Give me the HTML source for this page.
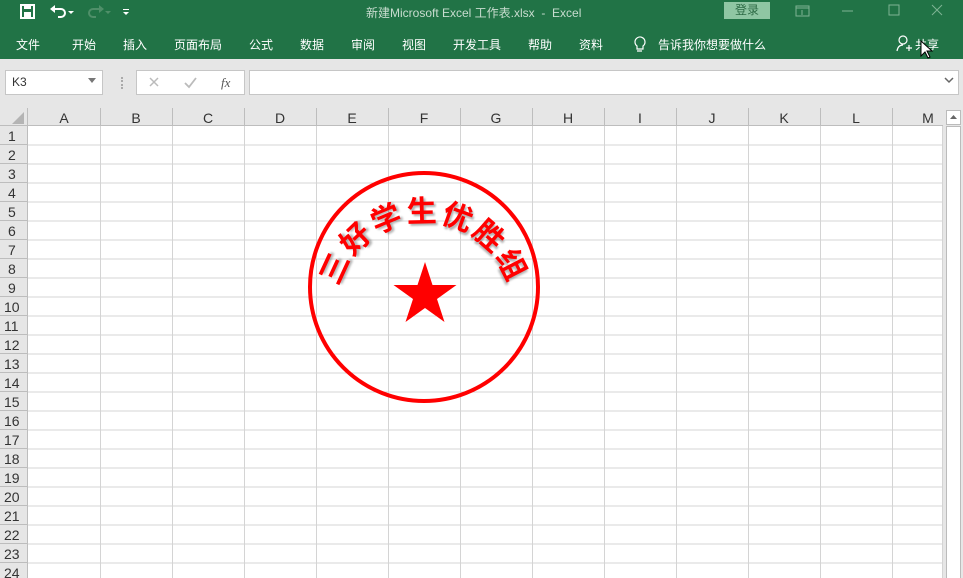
<!DOCTYPE html>
<html><head><meta charset="utf-8"><style>
body{margin:0;width:963px;height:578px;overflow:hidden;background:#fff;font-family:"Liberation Sans","Noto Sans CJK SC",sans-serif;position:relative}
.a{position:absolute}
.tab{position:absolute;top:36px;color:#fff;font-size:12px}
</style></head><body>
<div class="a" style="left:0;top:0;width:963px;height:59px;background:#217346"></div>
<svg class="a" style="left:0;top:0" width="140" height="24">
<rect x="21" y="5" width="13" height="13" fill="none" stroke="#fff" stroke-width="2"/><rect x="24" y="5" width="7" height="4" fill="#fff"/><rect x="24" y="12" width="7" height="6" fill="#fff"/>
<path d="M53 9 h8 a4 4 0 0 1 0 8 h-3" fill="none" stroke="#fff" stroke-width="2"/><path d="M50 9 l5 -4 v8z" fill="#fff"/><path d="M68 11 l3 3 l3 -3z" fill="#fff"/>
<path d="M101 9 h-8 a4 4 0 0 0 0 8 h3" fill="none" stroke="#4f8f69" stroke-width="2"/><path d="M104 9 l-5 -4 v8z" fill="#4f8f69"/><path d="M105 11 l3 3 l3 -3z" fill="#4f8f69"/>
<rect x="123" y="9" width="6" height="1" fill="#fff"/><path d="M123 12 l3 3 l3 -3z" fill="#fff"/>
</svg>
<div class="a" style="left:366px;top:4px;color:#c8dccf;font-size:12px">新建Microsoft Excel 工作表.xlsx&nbsp; - &nbsp;Excel</div>
<div class="a" style="left:724px;top:2px;width:46px;height:17px;background:#8fc6a3;color:#2c6a44;font-size:12px;text-align:center;line-height:17px">登录</div>
<svg class="a" style="left:790px;top:0" width="173" height="24">
<rect x="6" y="6" width="13" height="10" fill="none" stroke="#7fb394"/><path d="M6 8 h13 M12 10 v5" stroke="#7fb394" fill="none"/>
<path d="M52 11 h11" stroke="#7fb394"/>
<rect x="99" y="5" width="10" height="10" fill="none" stroke="#7fb394"/>
<path d="M142 5 l10 10 M152 5 l-10 10" stroke="#7fb394"/>
</svg>
<div class="tab" style="left:16px">文件</div><div class="tab" style="left:72px">开始</div><div class="tab" style="left:123px">插入</div><div class="tab" style="left:174px">页面布局</div><div class="tab" style="left:249px">公式</div><div class="tab" style="left:300px">数据</div><div class="tab" style="left:351px">审阅</div><div class="tab" style="left:402px">视图</div><div class="tab" style="left:453px">开发工具</div><div class="tab" style="left:528px">帮助</div><div class="tab" style="left:579px">资料</div>
<svg class="a" style="left:630px;top:34px" width="20" height="20"><path d="M5 8 a5 5 0 1 1 8 4 v3 h-6 v-3 a5 5 0 0 1 -2 -4z M7 17 h5" fill="none" stroke="#fff" stroke-width="1.2"/></svg>
<div class="tab" style="left:658px">告诉我你想要做什么</div>
<svg class="a" style="left:895px;top:34px" width="20" height="20"><circle cx="8" cy="6" r="4" fill="none" stroke="#fff" stroke-width="1.2"/><path d="M2 17 q1 -6 6 -6 M11 14 h6 M14 11 v6" fill="none" stroke="#fff" stroke-width="1.2"/></svg>
<div class="tab" style="left:915px">共享</div>
<svg class="a" style="left:920px;top:40px" width="14" height="20"><path d="M1 1 v15 l4 -4 l3 6 l2 -1 l-3 -6 h5z" fill="#fff" stroke="#000"/></svg>
<div class="a" style="left:0;top:59px;width:963px;height:49px;background:#e6e6e6"></div>
<div class="a" style="left:5px;top:70px;width:98px;height:25px;background:#fff;border:1px solid #c6c6c6;box-sizing:border-box;font-size:12px;line-height:23px;padding-left:6px;color:#333">K3</div>
<svg class="a" style="left:88px;top:78px" width="10" height="6"><path d="M0 0h8l-4 5z" fill="#777"/></svg>
<div class="a" style="left:121px;top:77px;width:2px;height:12px;border-left:2px dotted #aaa"></div>
<div class="a" style="left:136px;top:70px;width:109px;height:25px;background:#fff;border:1px solid #c6c6c6;box-sizing:border-box"></div>
<svg class="a" style="left:136px;top:70px" width="110" height="25"><path d="M14 8 l8 8 M22 8 l-8 8" stroke="#bbb" stroke-width="1.5"/><path d="M49 13 l4 4 l7 -9" stroke="#bbb" stroke-width="1.8" fill="none"/><text x="85" y="17" font-family="Liberation Serif" font-style="italic" font-size="13" fill="#555">fx</text></svg>
<div class="a" style="left:249px;top:70px;width:710px;height:25px;background:#fff;border:1px solid #c6c6c6;box-sizing:border-box"></div>
<svg class="a" style="left:944px;top:77px" width="12" height="8"><path d="M1 1 l4 4 l4 -4" stroke="#666" stroke-width="1.5" fill="none"/></svg>
<svg class="a" style="left:0;top:108px" width="963" height="470" font-family="Liberation Sans" font-size="14" fill="#333">
<rect x="0" y="0" width="943" height="18" fill="#e6e6e6"/>
<rect x="0" y="0" width="27" height="470" fill="#e6e6e6"/>
<path d="M24 4 v12 h-12z" fill="#b4b4b4"/>
<g stroke="#d4d4d4">
<path d="M27 37h916M27 56h916M27 75h916M27 94h916M27 113h916M27 132h916M27 151h916M27 170h916M27 189h916M27 208h916M27 227h916M27 246h916M27 265h916M27 284h916M27 303h916M27 322h916M27 341h916M27 360h916M27 379h916M27 398h916M27 417h916M27 436h916M27 455h916"/>
<path d="M100.5 18v452M172.5 18v452M244.5 18v452M316.5 18v452M388.5 18v452M460.5 18v452M532.5 18v452M604.5 18v452M676.5 18v452M748.5 18v452M820.5 18v452M892.5 18v452M942.5 18v452"/>
</g>
<g stroke="#bdbdbd"><path d="M0 17.5h943M27.5 0v470"/>
<path d="M100.5 0v18M172.5 0v18M244.5 0v18M316.5 0v18M388.5 0v18M460.5 0v18M532.5 0v18M604.5 0v18M676.5 0v18M748.5 0v18M820.5 0v18M892.5 0v18"/>
<path d="M0 36.5h27M0 55.5h27M0 74.5h27M0 93.5h27M0 112.5h27M0 131.5h27M0 150.5h27M0 169.5h27M0 188.5h27M0 207.5h27M0 226.5h27M0 245.5h27M0 264.5h27M0 283.5h27M0 302.5h27M0 321.5h27M0 340.5h27M0 359.5h27M0 378.5h27M0 397.5h27M0 416.5h27M0 435.5h27M0 454.5h27"/></g>
<g text-anchor="middle"><text x="64" y="15">A</text><text x="136" y="15">B</text><text x="208" y="15">C</text><text x="280" y="15">D</text><text x="352" y="15">E</text><text x="424" y="15">F</text><text x="496" y="15">G</text><text x="568" y="15">H</text><text x="640" y="15">I</text><text x="712" y="15">J</text><text x="784" y="15">K</text><text x="856" y="15">L</text><text x="928" y="15">M</text></g>
<g><text x="8" y="33">1</text><text x="8" y="52">2</text><text x="8" y="71">3</text><text x="8" y="90">4</text><text x="8" y="109">5</text><text x="8" y="128">6</text><text x="8" y="147">7</text><text x="8" y="166">8</text><text x="8" y="185">9</text><text x="4" y="204">10</text><text x="4" y="223">11</text><text x="4" y="242">12</text><text x="4" y="261">13</text><text x="4" y="280">14</text><text x="4" y="299">15</text><text x="4" y="318">16</text><text x="4" y="337">17</text><text x="4" y="356">18</text><text x="4" y="375">19</text><text x="4" y="394">20</text><text x="4" y="413">21</text><text x="4" y="432">22</text><text x="4" y="451">23</text><text x="4" y="470">24</text></g>
<rect x="943" y="0" width="20" height="470" fill="#e6e6e6"/>
<rect x="946.5" y="2.5" width="14" height="14" fill="#fff" stroke="#bbb"/><path d="M950 11 l3.5 -4 l3.5 4z" fill="#666"/>
<rect x="946.5" y="18.5" width="14" height="460" fill="#fff" stroke="#bbb"/>
</svg>
<svg class="a" style="left:0;top:0" width="963" height="578">
<defs><path id="arc" d="M339 287 A88 88 0 0 1 509 287"/></defs>
<circle cx="424" cy="287" r="114" fill="none" stroke="#f00" stroke-width="4"/>
<path d="M425 262 L432.5 285 L456.5 285 L437 299 L444.5 322 L425 308 L405.5 322 L413 299 L393.5 285 L417.5 285Z" fill="#f00"/>
<text font-family="Noto Sans CJK SC,sans-serif" font-size="30" font-weight="bold" fill="#f00" style="text-shadow:2px 2px 2px rgba(0,0,0,.3)"><textPath href="#arc" startOffset="0" textLength="226" lengthAdjust="spacing">三好学生优胜组</textPath></text>
</svg>
</body></html>
